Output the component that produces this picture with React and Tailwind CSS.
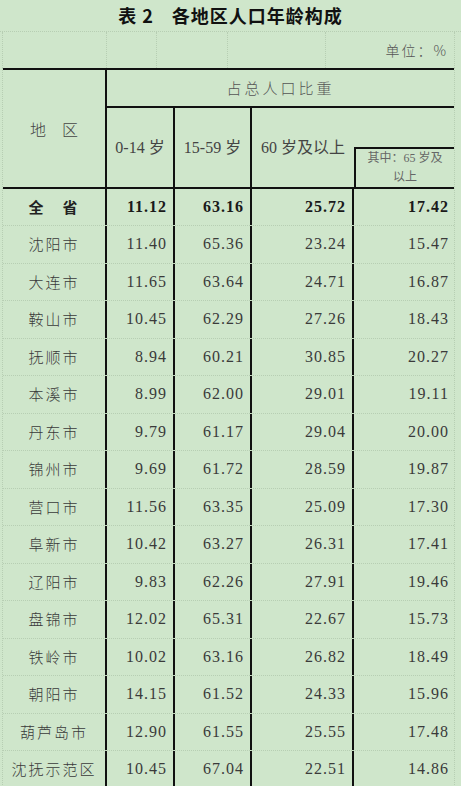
import React from "react";

const rows = [
  ["沈阳市", "11.40", "65.36", "23.24", "15.47"],
  ["大连市", "11.65", "63.64", "24.71", "16.87"],
  ["鞍山市", "10.45", "62.29", "27.26", "18.43"],
  ["抚顺市", "8.94", "60.21", "30.85", "20.27"],
  ["本溪市", "8.99", "62.00", "29.01", "19.11"],
  ["丹东市", "9.79", "61.17", "29.04", "20.00"],
  ["锦州市", "9.69", "61.72", "28.59", "19.87"],
  ["营口市", "11.56", "63.35", "25.09", "17.30"],
  ["阜新市", "10.42", "63.27", "26.31", "17.41"],
  ["辽阳市", "9.83", "62.26", "27.91", "19.46"],
  ["盘锦市", "12.02", "65.31", "22.67", "15.73"],
  ["铁岭市", "10.02", "63.16", "26.82", "18.49"],
  ["朝阳市", "14.15", "61.52", "24.33", "15.96"],
  ["葫芦岛市", "12.90", "61.55", "25.55", "17.48"],
  ["沈抚示范区", "10.45", "67.04", "22.51", "14.86"],
];

const serif = "font-['Liberation_Serif','Noto_Sans_CJK_SC',serif]";

const DataRow = ({ row, bold, first }) => (
  <div
    className={`flex ${first ? "h-[37px]" : "h-[37.5px]"} border-b border-dotted border-[#b7ceb3] text-[#3a3a3a]`}
  >
    <div
      className={`w-[104px] shrink-0 border-r-2 border-[#111] flex items-center justify-center text-[15px] tracking-[2px] ${bold ? "font-bold text-[#222]" : "font-light"}`}
    >
      {row[0]}
    </div>
    {row.slice(1).map((v, i) => (
      <div
        key={i}
        className={`${["w-[68px]", "w-[77px]", "w-[102px]", "w-[101px]"][i]} shrink-0 ${i < 3 ? "border-r-2 border-[#111]" : ""} flex items-center justify-end pr-[6px] ${serif} text-[16px] tracking-[1px] ${bold ? "font-bold text-[#1a1a1a]" : ""}`}
      >
        {v}
      </div>
    ))}
  </div>
);

export default function App() {
  return (
    <div className="w-[461px] h-[786px] overflow-hidden bg-[#cfe6cb] font-['Noto_Sans_CJK_SC',sans-serif]">
      {/* title */}
      <div className="h-[32px] flex items-center justify-center border-b border-dotted border-[#b7ceb3]">
        <span className="text-[18px] font-bold text-[#111] tracking-[1px]">
          表 2<span className="inline-block w-[18px]" />各地区人口年龄构成
        </span>
      </div>

      {/* unit row */}
      <div className="flex h-[36px]">
        <div className="w-[3px] shrink-0 border-r border-dotted border-[#b7ceb3]" />
        <div className="w-[104px] shrink-0 border-r border-dotted border-[#b7ceb3]" />
        <div className="w-[50px] shrink-0 border-r border-dotted border-[#b7ceb3]" />
        <div className="w-[71px] shrink-0 border-r border-dotted border-[#b7ceb3]" />
        <div className="w-[98px] shrink-0 border-r border-dotted border-[#b7ceb3]" />
        <div className="w-[129px] shrink-0 border-r border-dotted border-[#b7ceb3] flex items-center justify-end pr-[6px] text-[14px] font-light text-[#555] tracking-[2px]">
          单位：%
        </div>
      </div>

      {/* table */}
      <div className="flex">
        <div className="w-[3px] shrink-0 border-r border-dotted border-[#b7ceb3]" />
        <div className="w-[452px] shrink-0 border-r border-dotted border-[#b7ceb3]">
          {/* header */}
          <div className="flex h-[121px] border-t-2 border-b-2 border-[#111]">
            <div className="w-[104px] shrink-0 border-r-2 border-[#111] flex items-center justify-center text-[16px] font-light text-[#444]">
              地　区
            </div>
            <div className="flex-1 flex flex-col">
              <div className="h-[40px] border-b-2 border-[#111] flex items-center justify-center text-[15px] font-light text-[#555] tracking-[3px]">
                占总人口比重
              </div>
              <div className={`flex-1 flex text-[16px] text-[#444] ${serif}`}>
                <div className="w-[68px] shrink-0 border-r-2 border-[#111] flex items-center justify-center">
                  0-14 岁
                </div>
                <div className="w-[77px] shrink-0 border-r-2 border-[#111] flex items-center justify-center">
                  15-59 岁
                </div>
                <div className="w-[102px] shrink-0 flex items-center justify-center">
                  60 岁及以上
                </div>
                <div className="flex-1 flex flex-col">
                  <div className="h-[39px]" />
                  <div className="flex-1 border-t-2 border-l-2 border-[#111] flex flex-col items-center justify-center text-[12px] leading-[19px] text-[#666]">
                    <span>其中：65 岁及</span>
                    <span>以上</span>
                  </div>
                </div>
              </div>
            </div>
          </div>

          <DataRow row={["全　省", "11.12", "63.16", "25.72", "17.42"]} bold first />
          {rows.map((r) => (
            <DataRow key={r[0]} row={r} />
          ))}
        </div>
      </div>
    </div>
  );
}
